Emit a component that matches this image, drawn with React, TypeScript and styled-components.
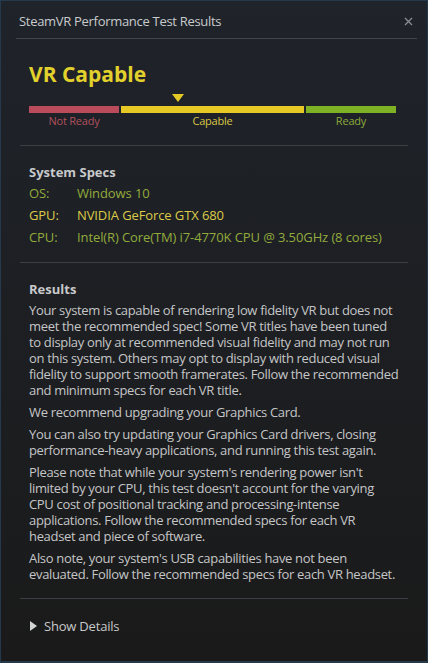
import React, { FC } from 'react';
import styled, { createGlobalStyle } from 'styled-components';

const GlobalStyle = createGlobalStyle`
    html, body {
        margin: 0;
        padding: 0;
        background: #1b1b1b;
    }
    body {
        font-family: 'Open Sans', 'Noto Sans', sans-serif;
    }
`;

const Window = styled.div`
    box-sizing: border-box;
    width: 428px;
    height: 663px;
    border: 1px solid #26394c;
    border-bottom-width: 2px;
    background: linear-gradient(to bottom, #1f232a 0%, #1d1f23 45%, #1a1a1a 100%);
    display: flex;
    flex-direction: column;
    padding: 0 10px 0 15px;
    overflow: hidden;
`;

const TitleBar = styled.div`
    flex-shrink: 0;
    display: flex;
    align-items: center;
    justify-content: space-between;
    height: 37px;
    padding: 3px 4px 0 3px;
    box-sizing: border-box;
    border-bottom: 1px solid #41454c;
    height: 38px;
`;

const Title = styled.div`
    color: #c9cbcd;
    font-size: 13px;
    letter-spacing: -0.3px;
`;

const CloseBtn = styled.div`
    width: 10px;
    height: 10px;
    display: flex;
    align-items: center;
    justify-content: center;
`;

const Section = styled.div<{ pad: string; divider?: boolean }>`
    flex-shrink: 0;
    padding: ${({ pad }) => pad};
    margin: 0 9px 0 4px;
    border-bottom: ${({ divider }) => (divider ? '1px solid #3b3e43' : 'none')};
`;

const Status = styled.div`
    color: #e2d12c;
    font-weight: 700;
    font-size: 21px;
    line-height: 24px;
    margin-bottom: 8px;
`;

const Marker = styled.div`
    height: 8px;
    position: relative;
    margin-bottom: 4px;
`;

const Arrow = styled.div<{ left: number }>`
    position: absolute;
    top: 0;
    left: ${({ left }) => left}px;
    width: 0;
    height: 0;
    border-left: 6px solid transparent;
    border-right: 6px solid transparent;
    border-top: 8px solid #e3c925;
`;

const Meter = styled.div`
    display: grid;
    grid-template-columns: 90px 183px 90px;
    column-gap: 2px;
`;

const Segment = styled.div<{ color: string; text: string }>`
    display: flex;
    flex-direction: column;
    align-items: center;

    &::before {
        content: '';
        align-self: stretch;
        height: 7px;
        background: ${({ color }) => color};
    }

    span {
        color: ${({ text }) => text};
        font-size: 11px;
        line-height: 14px;
        margin-top: 1px;
        letter-spacing: -0.2px;
    }
`;

const Heading = styled.div`
    color: #c8c9ca;
    font-weight: 700;
    font-size: 13px;
    line-height: 16px;
    margin-bottom: 5px;
`;

const SpecGrid = styled.div`
    display: grid;
    grid-template-columns: 48px 1fr;
    row-gap: 6px;
    font-size: 13px;
    line-height: 16px;
    letter-spacing: -0.1px;
`;

const SpecCell = styled.div<{ tone: 'green' | 'yellow' }>`
    color: ${({ tone }) => (tone === 'yellow' ? '#dccb48' : '#93ab3c')};
    white-space: nowrap;
`;

const Para = styled.p`
    margin: 0 0 6px 0;
    max-width: 372px;
    color: #c5c6c7;
    font-size: 13px;
    line-height: 16px;
    letter-spacing: -0.33px;

    &:last-child {
        margin-bottom: 0;
    }
`;

const Details = styled.div`
    display: flex;
    align-items: center;
    gap: 7px;
    margin-left: 1px;
    color: #c8c9ca;
    font-size: 13px;
    line-height: 16px;
    letter-spacing: -0.2px;
    cursor: pointer;

    &::before {
        content: '';
        width: 0;
        height: 0;
        border-top: 5px solid transparent;
        border-bottom: 5px solid transparent;
        border-left: 7px solid #d2d3d4;
    }
`;

const specs = [
    { label: 'OS:', value: 'Windows 10', tone: 'green' as const },
    { label: 'GPU:', value: 'NVIDIA GeForce GTX 680', tone: 'yellow' as const },
    { label: 'CPU:', value: 'Intel(R) Core(TM) i7-4770K CPU @ 3.50GHz (8 cores)', tone: 'green' as const },
];

const paragraphs = [
    'Your system is capable of rendering low fidelity VR but does not meet the recommended spec! Some VR titles have been tuned to display only at recommended visual fidelity and may not run on this system. Others may opt to display with reduced visual fidelity to support smooth framerates. Follow the recommended and minimum specs for each VR title.',
    'We recommend upgrading your Graphics Card.',
    'You can also try updating your Graphics Card drivers, closing performance-heavy applications, and running this test again.',
    "Please note that while your system's rendering power isn't limited by your CPU, this test doesn't account for the varying CPU cost of positional tracking and processing-intense applications. Follow the recommended specs for each VR headset and piece of software.",
    "Also note, your system's USB capabilities have not been evaluated. Follow the recommended specs for each VR headset.",
];

const App: FC = () => (
    <>
        <GlobalStyle />
        <Window>
            <TitleBar>
                <Title>SteamVR Performance Test Results</Title>
                <CloseBtn>
                    <svg width="9" height="9" viewBox="0 0 9 9">
                        <path d="M1 1L8 8M8 1L1 8" stroke="#8a8e94" strokeWidth="1.3" />
                    </svg>
                </CloseBtn>
            </TitleBar>
            <Section pad="23px 0 17px 9px" divider>
                <Status>VR Capable</Status>
                <Marker>
                    <Arrow left={143} />
                </Marker>
                <Meter>
                    <Segment color="#b94b5a" text="#b0505e">
                        <span>Not Ready</span>
                    </Segment>
                    <Segment color="#e6c924" text="#d9c646">
                        <span>Capable</span>
                    </Segment>
                    <Segment color="#7fb124" text="#8caa3c">
                        <span>Ready</span>
                    </Segment>
                </Meter>
            </Section>
            <Section pad="18px 0 17px 9px" divider>
                <Heading>System Specs</Heading>
                <SpecGrid>
                    {specs.map((s) => (
                        <React.Fragment key={s.label}>
                            <SpecCell tone={s.tone}>{s.label}</SpecCell>
                            <SpecCell tone={s.tone}>{s.value}</SpecCell>
                        </React.Fragment>
                    ))}
                </SpecGrid>
            </Section>
            <Section pad="18px 0 16px 9px" divider>
                <Heading>Results</Heading>
                {paragraphs.map((p, i) => (
                    <Para key={i}>{p}</Para>
                ))}
            </Section>
            <Section pad="19px 0 0 9px">
                <Details>Show Details</Details>
            </Section>
        </Window>
    </>
);

export default App;
